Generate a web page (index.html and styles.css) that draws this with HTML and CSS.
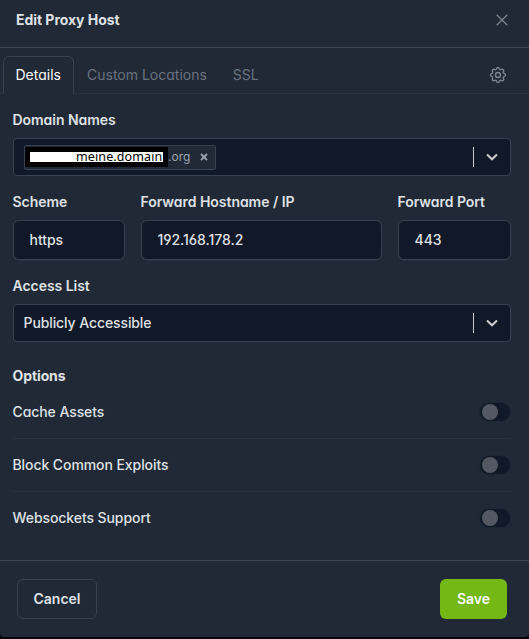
FILE: index.html
```html
<!DOCTYPE html>
<html lang="en">
<head>
    <meta charset="UTF-8">
    <meta name="viewport" content="width=device-width, initial-scale=1.0">
    <title>Edit Proxy Host</title>
    <link rel="stylesheet" href="styles.css">
</head>
<body>
    <form class="modal">
        <div class="modal-header">
            <h5 class="modal-title">Edit Proxy Host</h5>
            <svg class="close" width="12" height="12" viewBox="0 0 12 12"><path d="M.7 .7l10.6 10.6M11.3 .7L.7 11.3"/></svg>
        </div>

        <!-- Tabs -->
        <div class="tabs">
            <a class="tab active">Details</a>
            <a class="tab">Custom Locations</a>
            <a class="tab">SSL</a>
            <a class="tab settings">
                <svg width="20" height="20" viewBox="0 0 24 24">
                    <path d="M10.325 4.317c.426 -1.756 2.924 -1.756 3.35 0a1.724 1.724 0 0 0 2.573 1.066c1.543 -.94 3.31 .826 2.37 2.37a1.724 1.724 0 0 0 1.065 2.572c1.756 .426 1.756 2.924 0 3.35a1.724 1.724 0 0 0 -1.066 2.573c.94 1.543 -.826 3.31 -2.37 2.37a1.724 1.724 0 0 0 -2.572 1.065c-.426 1.756 -2.924 1.756 -3.35 0a1.724 1.724 0 0 0 -2.573 -1.066c-1.543 .94 -3.31 -.826 -2.37 -2.37a1.724 1.724 0 0 0 -1.065 -2.572c-1.756 -.426 -1.756 -2.924 0 -3.35a1.724 1.724 0 0 0 1.066 -2.573c-.94 -1.543 .826 -3.31 2.37 -2.37c1 .608 2.296 .07 2.572 -1.065z"/>
                    <path d="M9 12a3 3 0 1 0 6 0a3 3 0 0 0 -6 0"/>
                </svg>
            </a>
        </div>

        <div class="modal-body">
            <label class="label">Domain Names</label>
            <div class="select">
                <div class="tag">
                    <span class="mask"><span class="mask-text">meine.domain</span></span>
                    <span class="tag-text">.org</span>
                    <svg class="tag-remove" width="8" height="8" viewBox="0 0 8 8"><path d="M1 1l6 6M7 1L1 7"/></svg>
                </div>
                <span class="separator"></span>
                <svg class="chevron" width="12" height="8" viewBox="0 0 12 8"><path d="M1 1.4l5 4.8l5 -4.8"/></svg>
            </div>

            <div class="row">
                <div class="field">
                    <label class="label">Scheme</label>
                    <div class="input">https</div>
                </div>
                <div class="field">
                    <label class="label">Forward Hostname / IP</label>
                    <div class="input">192.168.178.2</div>
                </div>
                <div class="field">
                    <label class="label">Forward Port</label>
                    <div class="input">443</div>
                </div>
            </div>

            <label class="label">Access List</label>
            <div class="select">
                <span class="select-value">Publicly Accessible</span>
                <span class="separator"></span>
                <svg class="chevron" width="12" height="8" viewBox="0 0 12 8"><path d="M1 1.4l5 4.8l5 -4.8"/></svg>
            </div>

            <!-- Options -->
            <h4 class="options-title">Options</h4>
            <div class="option">Cache Assets <span class="switch"></span></div>
            <div class="option">Block Common Exploits <span class="switch"></span></div>
            <div class="option">Websockets Support <span class="switch"></span></div>
        </div>

        <div class="modal-footer">
            <button type="button" class="btn">Cancel</button>
            <button type="button" class="btn btn-save">Save</button>
        </div>
    </form>
</body>
</html>
```
FILE: styles.css
```css
* {
    box-sizing: border-box;
}
body {
    margin: 0;
    height: 639px;
    overflow: hidden;
    background-color: #03060c;
    color: #dfe1e5;
    font-family: Inter, "Liberation Sans", sans-serif;
    font-size: 14px;
    font-weight: 500;
    line-height: 20px;
    font-feature-settings: "cv03", "cv04", "cv11";
}
svg {
    display: block;
    flex: none;
    fill: none;
    stroke: currentColor;
}
.modal {
    height: 637px;
    background-color: #212936;
    border-radius: 0 0 4px 4px;
}
.modal-header {
    display: flex;
    justify-content: space-between;
    height: 48px;
    padding: 10px 21px 0 16px;
    border-bottom: 1px solid #3d4653;
}
.modal-title {
    margin: 0;
    font-size: 14px;
    font-weight: 700;
    letter-spacing: -0.04px;
}
.close {
    margin-top: 4px;
    color: #7d838d;
    stroke-width: 1.3;
}
.tabs {
    display: flex;
    height: 46px;
    padding: 8px 8px 0 3px;
    border-bottom: 1px solid #273542;
}
.tab {
    height: 38px;
    padding: 8px 12px;
    border: 1px solid transparent;
    color: #6a7280;
    font-weight: 400;
}
.tab.active {
    width: 71px;
    padding: 8px 11.5px;
    border-color: #364250;
    border-bottom-color: #212936;
    border-radius: 6px 6px 0 0;
    background-color: #212936;
    color: #f9fafb;
}
.tab.settings {
    margin-left: auto;
    color: #7d8490;
    stroke-width: 1.7;
}
.modal-body {
    height: 466px;
    padding: 16px 18px 0 13px;
}
.label {
    display: block;
    height: 28px;
    margin-left: -0.5px;
    font-weight: 600;
    letter-spacing: -0.04px;
}
.select {
    display: flex;
    align-items: center;
    height: 38px;
    padding: 0 12px 0 10px;
    border: 1px solid #364250;
    border-radius: 4px;
    background-color: #111827;
}
.select-value {
    margin-left: -0.5px;
    letter-spacing: -0.1px;
}
.tag {
    display: flex;
    align-items: center;
    width: 192px;
    height: 25px;
    border: 1px solid #364250;
    border-radius: 2px;
    background-color: #212936;
    color: #9ca3af;
    font-size: 12px;
    font-weight: 400;
}
.mask {
    width: 143px;
    height: 20px;
    padding: 5px;
    background-color: #000;
}
.mask-text {
    display: block;
    height: 10px;
    padding-left: 46px;
    background-color: #fff;
    color: #000;
    font-family: "Noto Sans", sans-serif;
    font-size: 12.5px;
    font-weight: 400;
    line-height: 9px;
    letter-spacing: 0.12px;
}
.tag-remove {
    margin-left: auto;
    margin-right: 7px;
    stroke-width: 1.8;
}
.separator {
    width: 1px;
    height: 20px;
    margin-left: auto;
    background-color: #ccc;
}
.chevron {
    margin-left: 12px;
    color: #ccc;
    stroke-width: 2.1;
}
.row {
    display: grid;
    grid-template-columns: 112px 241px 113px;
    gap: 16px;
    padding: 16px 0;
}
.input {
    height: 40px;
    padding: 9px 15.5px;
    border: 1px solid #364250;
    border-radius: 6px;
    background-color: #111827;
    box-shadow: 0 1px 1px rgba(55, 70, 85, 0.3);
    letter-spacing: -0.04px;
}
.options-title {
    margin: 24px 0 0 -0.5px;
    font-size: 14px;
    font-weight: 700;
    letter-spacing: -0.1px;
}
.option {
    display: flex;
    justify-content: space-between;
    height: 53px;
    padding-top: 16px;
    border-bottom: 1px solid #273542;
    letter-spacing: -0.08px;
    text-indent: -0.5px;
}
.option:last-child {
    border: none;
}
.switch {
    width: 32px;
    height: 20px;
    padding: 1px 2px;
    border: 1px solid #1c2635;
    border-radius: 10px;
    background-color: #111827;
}
.switch::before {
    content: "";
    display: block;
    width: 16px;
    height: 16px;
    border-radius: 50%;
    background-color: #545862;
}
.modal-footer {
    display: flex;
    justify-content: space-between;
    padding: 18px 22px 0 17px;
    border-top: 1px solid #3d4653;
}
.btn {
    width: 80px;
    height: 40px;
    padding: 0 0 2px;
    border: 1px solid #364250;
    border-radius: 6px;
    background-color: #212936;
    color: #dfe1e5;
    font-family: inherit;
    font-size: 14px;
    font-weight: 600;
}
.btn-save {
    width: 67px;
    border: none;
    background-color: #74b816;
    color: #f9fafb;
}
```
